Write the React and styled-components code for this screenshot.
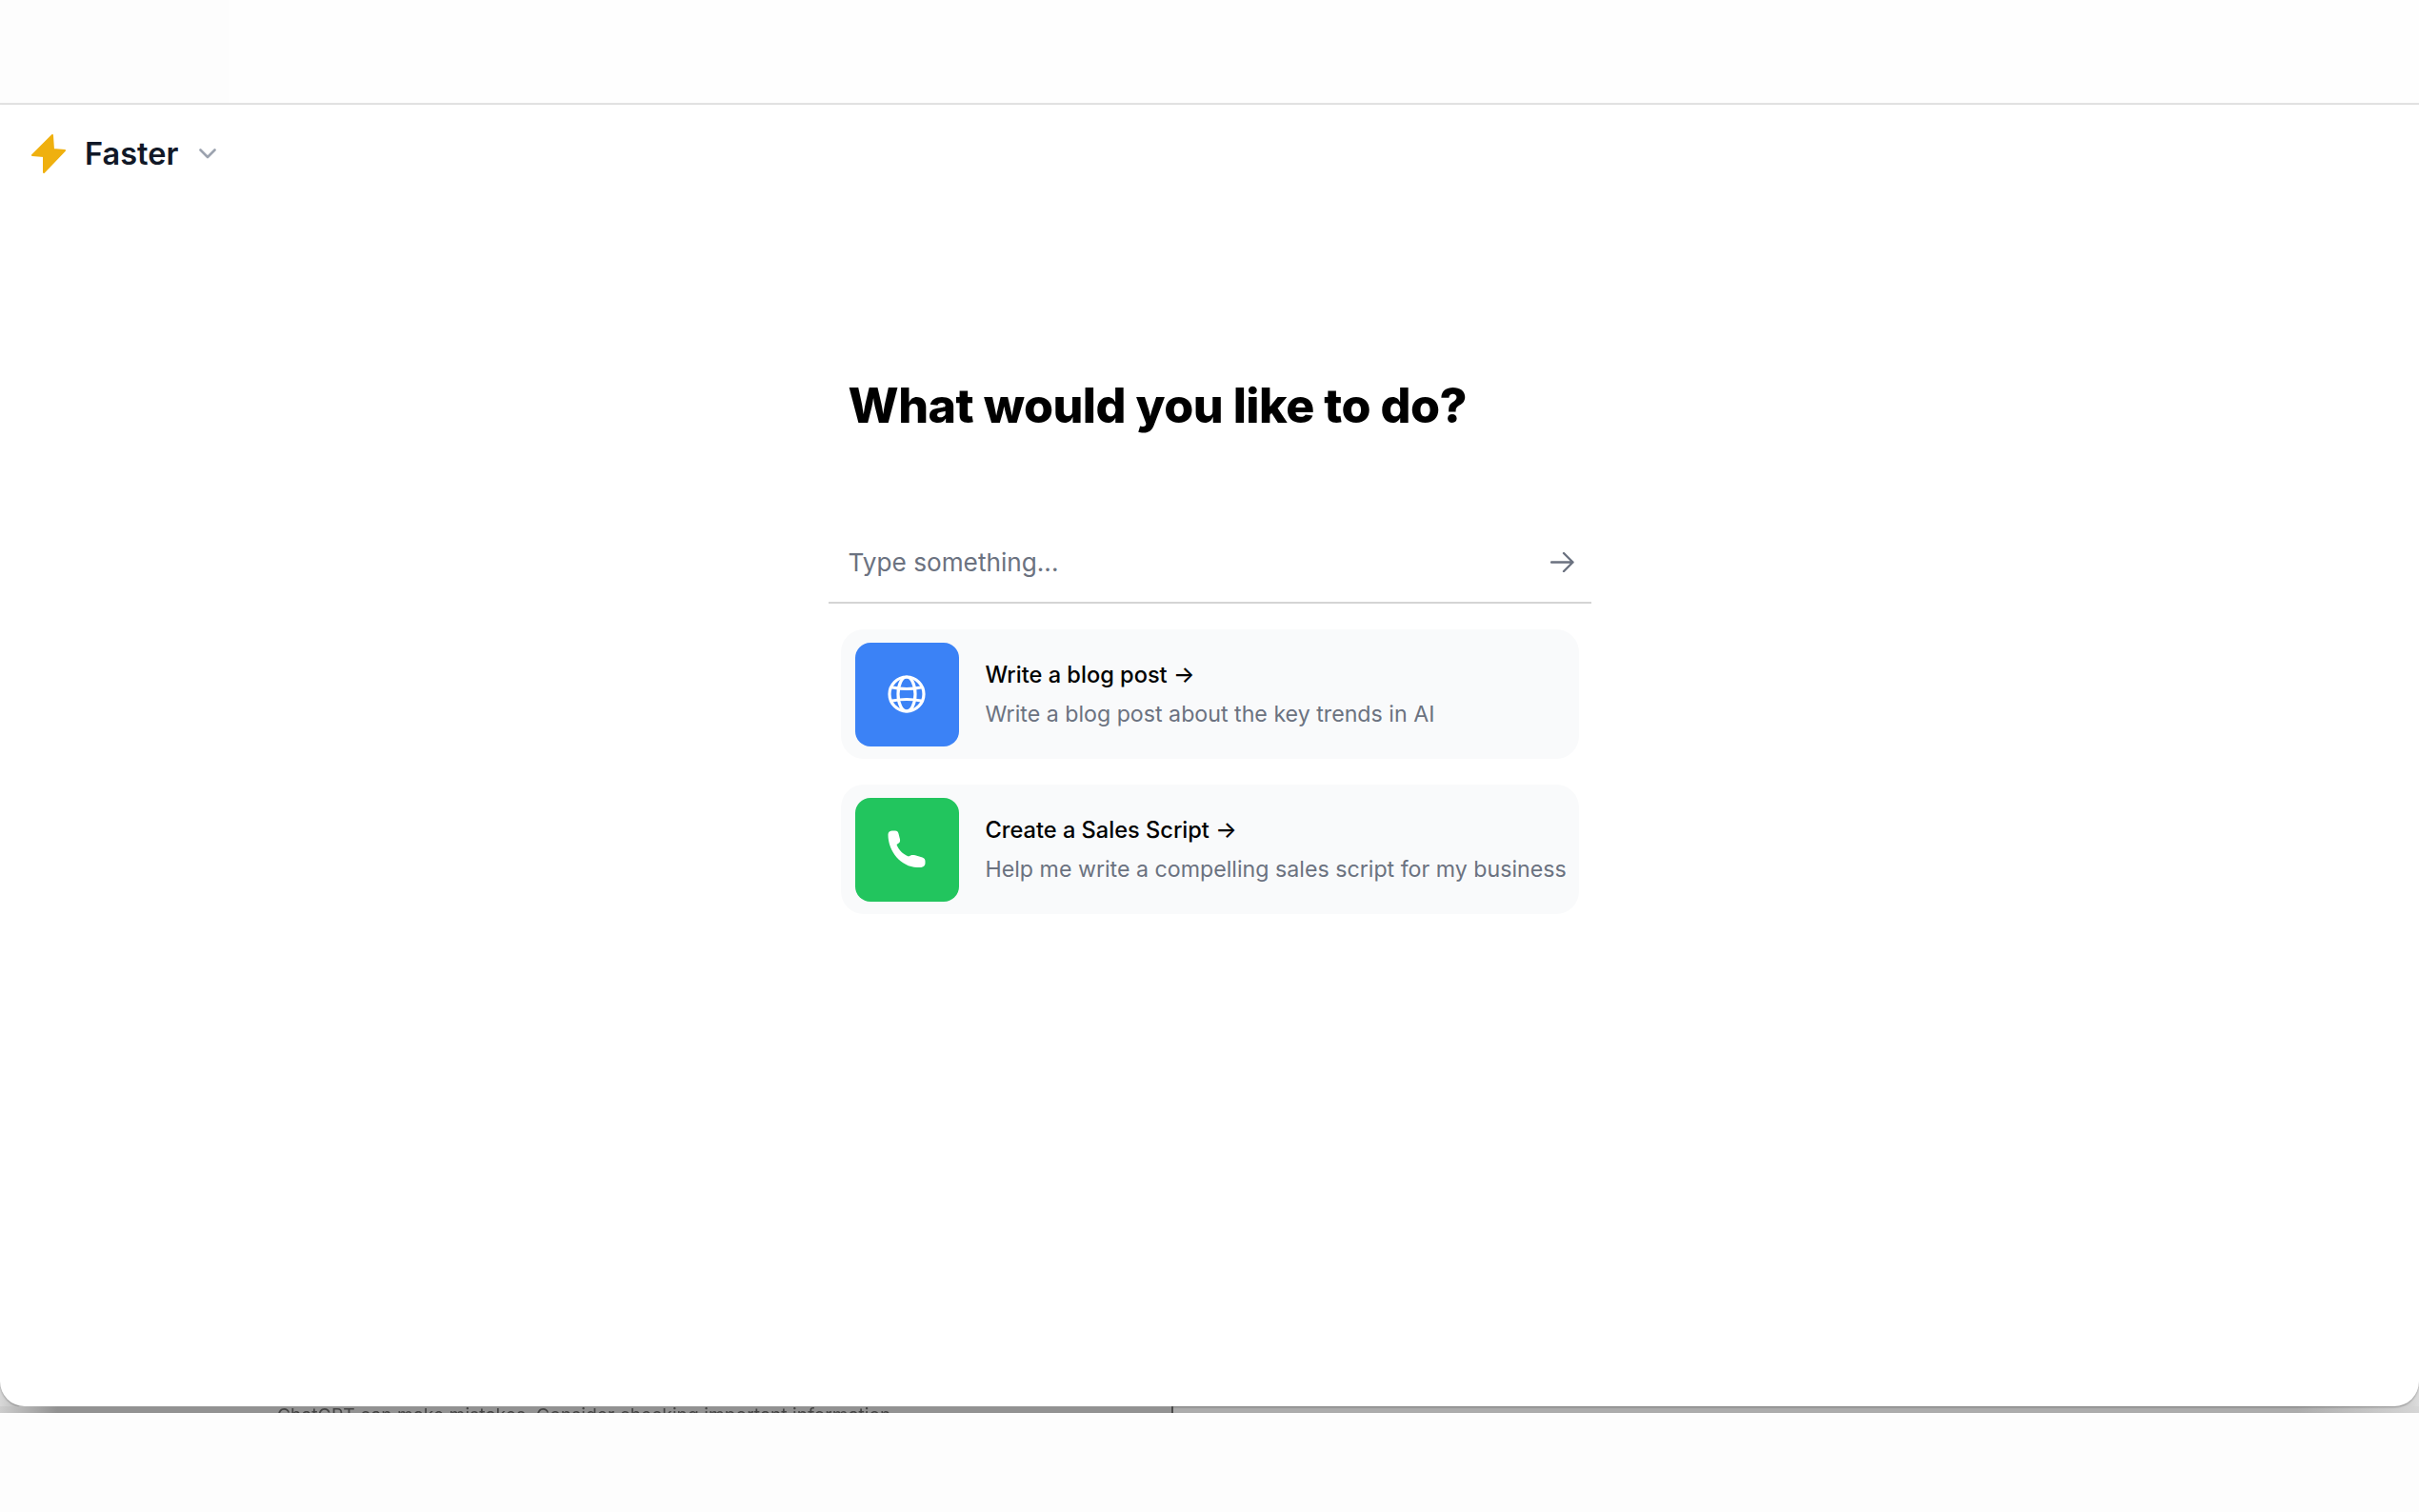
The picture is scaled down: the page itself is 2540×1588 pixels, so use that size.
import React from 'react'
import styled, { createGlobalStyle } from 'styled-components'

const GlobalStyle = createGlobalStyle`
  html, body {
    margin: 0;
    padding: 0;
    background: #fdfdfd;
    font-family: Inter, "Liberation Sans", sans-serif;
  }
`

const Page = styled.div`
  width: 2540px;
  height: 1588px;
  overflow: hidden;
  display: flex;
  flex-direction: column;
  background: #fdfdfd;
`

const TopBar = styled.div`
  height: 108px;
  flex: none;
  box-sizing: content-box;
  border-bottom: 2px solid #e3e3e3;
  background: linear-gradient(90deg, #fdfdfd 240px, #fefefe 240px);
`

const Sheet = styled.div`
  display: flex;
  flex-direction: column;
  flex: none;
  background: linear-gradient(90deg, #d8d8d8 0, #a0a0a0 40px, #a0a0a0 2480px, #dcdcdc 100%);
`

const Panel = styled.main`
  height: 1367px;
  flex: none;
  background: #fff;
  border-radius: 0 0 26px 26px;
  box-shadow: 0 1px 2px rgba(0, 0, 0, 0.3);
  position: relative;
  display: flex;
  flex-direction: column;
`

const Strip = styled.div`
  display: flex;
  height: 7px;
  overflow: hidden;
`

const StripLeft = styled.div`
  width: 1232px;
  flex: none;
  padding-left: 291px;
  box-sizing: border-box;
  background: linear-gradient(90deg, #cdcdcd 0, #929292 60px);
  border-right: 2px solid #4a4a4a;
  color: #454545;
  font-size: 19.3px;
  line-height: 18px;
  white-space: nowrap;
  filter: blur(0.4px);
`

const StripRight = styled.div`
  flex: 1;
  background: linear-gradient(90deg, #acacac 0, #acacac 1180px, #d6d6d6 100%);
`

const ModelRow = styled.div`
  display: flex;
  align-items: center;
  padding: 30px 33px 0;
  height: 42px;
`

const ModelName = styled.span`
  margin: 0 22px 0 20px;
  font-size: 32.5px;
  font-weight: 600;
  color: #111827;
`

const Column = styled.div`
  width: 801px;
  align-self: center;
  display: flex;
  flex-direction: column;
`

const Heading = styled.h1`
  margin: 213px 0 0 21px;
  font-size: 50.2px;
  line-height: 62px;
  font-weight: 800;
  color: #000;
  letter-spacing: -0.5px;
`

const InputRow = styled.div`
  margin-top: 91px;
  height: 84px;
  display: flex;
  align-items: center;
  padding: 0 18px 0 21px;
  border-bottom: 2px solid #d4d4d4;
`

const Input = styled.input`
  flex: 1;
  border: 0;
  outline: 0;
  padding: 0;
  background: transparent;
  font-family: inherit;
  font-size: 26.2px;
  color: #111827;

  &::placeholder {
    color: #6b7280;
    opacity: 1;
  }
`

const CardList = styled.div`
  margin-top: 27px;
  padding: 0 13px;
  display: flex;
  flex-direction: column;
  gap: 27px;
`

const Card = styled.div`
  height: 136px;
  display: flex;
  align-items: center;
  gap: 28px;
  padding: 0 15px;
  border-radius: 24px;
  background: #f9fafb;
`

const IconTile = styled.div`
  width: 109px;
  height: 109px;
  flex: none;
  display: flex;
  align-items: center;
  justify-content: center;
  border-radius: 16px;
  background: ${props => props.color};
  color: #fff;
`

const CardText = styled.div`
  display: flex;
  flex-direction: column;
  gap: 11px;
  white-space: nowrap;
`

const CardTitle = styled.div`
  font-size: 23.6px;
  line-height: 30px;
  font-weight: 500;
  color: #000;
`

const CardDesc = styled.div`
  font-size: 23.2px;
  line-height: 30px;
  color: #6b7280;
`

const Bolt = () => (
  <svg width="36" height="41" viewBox="0 0 36 41" style={{ flex: 'none' }}>
    <path d="M22 1 L1 22 L13 23 L13 40 L35 17 L23 16 Z" fill="#efb00f" stroke="#efb00f" strokeWidth="2" strokeLinejoin="round" />
  </svg>
)

const Chevron = () => (
  <svg width="18" height="11" viewBox="0 0 18 11" fill="none">
    <path d="M1.5 1.5 L9 9 L16.5 1.5" stroke="#9ca3af" strokeWidth="2.6" strokeLinecap="round" strokeLinejoin="round" />
  </svg>
)

const SendArrow = () => (
  <svg width="25" height="21" viewBox="0 0 25 21" fill="none">
    <path d="M1 10.5 H23.5 M14 1 L23.5 10.5 L14 20" stroke="#6b7280" strokeWidth="2.4" strokeLinecap="round" strokeLinejoin="round" />
  </svg>
)

const GlobeIcon = () => (
  <svg width="40" height="40" viewBox="0 0 40 40" fill="none" stroke="currentColor" strokeWidth="3.2">
    <circle cx="20" cy="20" r="18" />
    <ellipse cx="20" cy="20" rx="9" ry="18" />
    <path d="M5 13 Q20 16 35 13 M5 27 Q20 24 35 27" strokeLinecap="round" />
  </svg>
)

const PhoneIcon = () => (
  <svg width="40" height="40" viewBox="0 0 40 40" fill="currentColor">
    <path d="M0.5 4.5 C0.5 2 2.5 0.5 5 0.5 L8 0.5 C10 0.5 11 1.5 11.5 3.5 L13 9.5 C13.5 12 12.5 13.5 9.5 15 C11.5 20.5 16 25 22 27.5 C24 26 26 25.5 29 26.2 L36.5 28.5 C38.5 29.2 39.5 30.5 39.5 32.5 L39.5 34.5 C39.5 37.5 37 39 34 39 L31 39 C14 38.5 0.5 22 0.5 4.5 Z" />
  </svg>
)

const cards = [
  { title: 'Write a blog post →', desc: 'Write a blog post about the key trends in AI', color: '#3b82f6', icon: <GlobeIcon /> },
  { title: 'Create a Sales Script →', desc: 'Help me write a compelling sales script for my business', color: '#22c55e', icon: <PhoneIcon /> },
]

function App() {
  return (
    <Page>
      <GlobalStyle />
      <TopBar />
      <Sheet>
        <Panel>
          <ModelRow>
            <Bolt />
            <ModelName>Faster</ModelName>
            <Chevron />
          </ModelRow>
          <Column>
            <Heading>What would you like to do?</Heading>
            <InputRow>
              <Input placeholder="Type something..." />
              <SendArrow />
            </InputRow>
            <CardList>
              {cards.map(card => (
                <Card key={card.title}>
                  <IconTile color={card.color}>{card.icon}</IconTile>
                  <CardText>
                    <CardTitle>{card.title}</CardTitle>
                    <CardDesc>{card.desc}</CardDesc>
                  </CardText>
                </Card>
              ))}
            </CardList>
          </Column>
        </Panel>
        <Strip>
          <StripLeft>ChatGPT can make mistakes. Consider checking important information.</StripLeft>
          <StripRight />
        </Strip>
      </Sheet>
    </Page>
  )
}

export default App
